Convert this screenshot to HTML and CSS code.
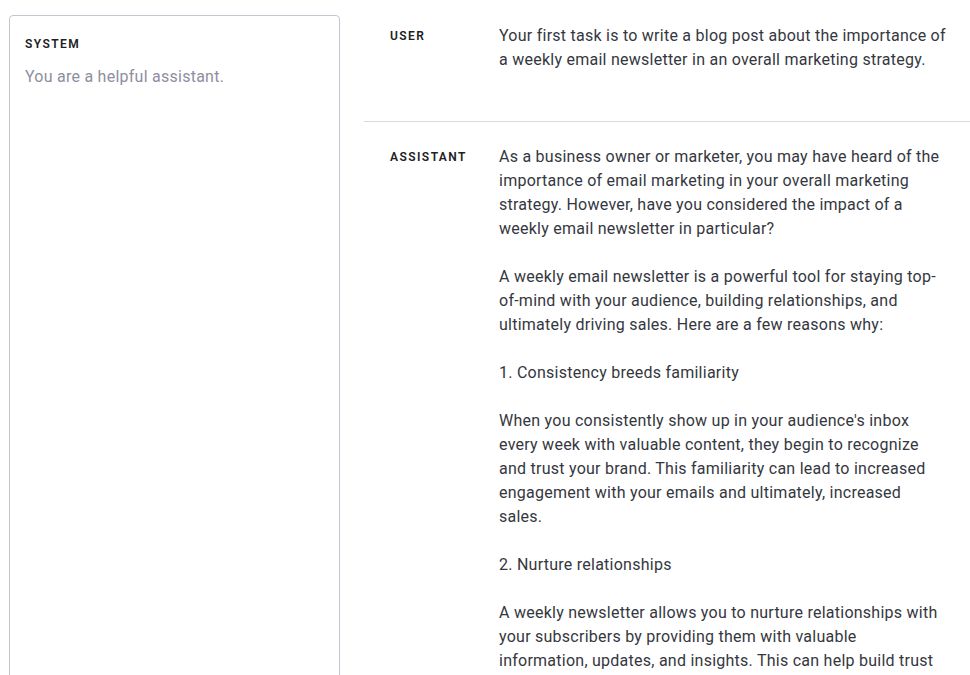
FILE: index.html
```html
<!DOCTYPE html>
<html lang="en">
<head>
  <meta charset="UTF-8">
  <meta name="viewport" content="width=device-width, initial-scale=1.0">
  <title>Playground</title>
  <link rel="stylesheet" href="styles.css">
</head>
<body>
  <div class="layout">
    <aside class="system-panel">
      <div class="label">System</div>
      <div class="system-text">You are a helpful assistant.</div>
    </aside>

    <main class="messages">
      <div class="message user">
        <div class="label">User</div>
        <div class="message-text">Your first task is to write a blog post about the importance of a weekly email newsletter in an overall marketing strategy.</div>
      </div>

      <div class="message">
        <div class="label">Assistant</div>
        <div class="message-text">
          <p>As a business owner or marketer, you may have heard of the importance of email marketing in your overall marketing strategy. However, have you considered the impact of a weekly email newsletter in particular?</p>
          <p>A weekly email newsletter is a powerful tool for staying top-of-mind with your audience, building relationships, and ultimately driving sales. Here are a few reasons why:</p>
          <p>1. Consistency breeds familiarity</p>
          <p>When you consistently show up in your audience's inbox every week with valuable content, they begin to recognize and trust your brand. This familiarity can lead to increased engagement with your emails and ultimately, increased sales.</p>
          <p>2. Nurture relationships</p>
          <p>A weekly newsletter allows you to nurture relationships with your subscribers by providing them with valuable information, updates, and insights. This can help build trust and loyalty over time.</p>
        </div>
      </div>
    </main>
  </div>
</body>
</html>
```

FILE: styles.css
```css
body {
  margin: 0;
  font-family: Roboto, "Noto Sans", Arial, sans-serif;
  font-size: 16px;
  line-height: 24px;
  letter-spacing: 0.25px;
  color: #353740;
  background: #fff;
}
.layout {
  display: flex;
  gap: 24px;
  padding-left: 9px;
}
.system-panel {
  flex: none;
  width: 331px;
  box-sizing: border-box;
  margin-top: 15px;
  min-height: 700px;
  padding: 20px 15px;
  border: 1px solid #c5c5d2;
  border-radius: 4px;
}
.label {
  font-size: 12px;
  font-weight: 600;
  letter-spacing: 0.12em;
  text-transform: uppercase;
  color: #202123;
}
.system-panel .label {
  line-height: 16px;
}
.system-text {
  margin-top: 13px;
  color: #8e8ea0;
}
.messages {
  flex: 1;
}
.message {
  display: flex;
  padding: 23px 24px 24px 26px;
  border-bottom: 1px solid #d9d9e3;
}
.message.user {
  padding-top: 24px;
  padding-bottom: 49px;
}
.message .label {
  flex: none;
  width: 109px;
}
.message-text {
  flex: 1;
}
.message-text p {
  margin: 0 0 24px;
}
```
